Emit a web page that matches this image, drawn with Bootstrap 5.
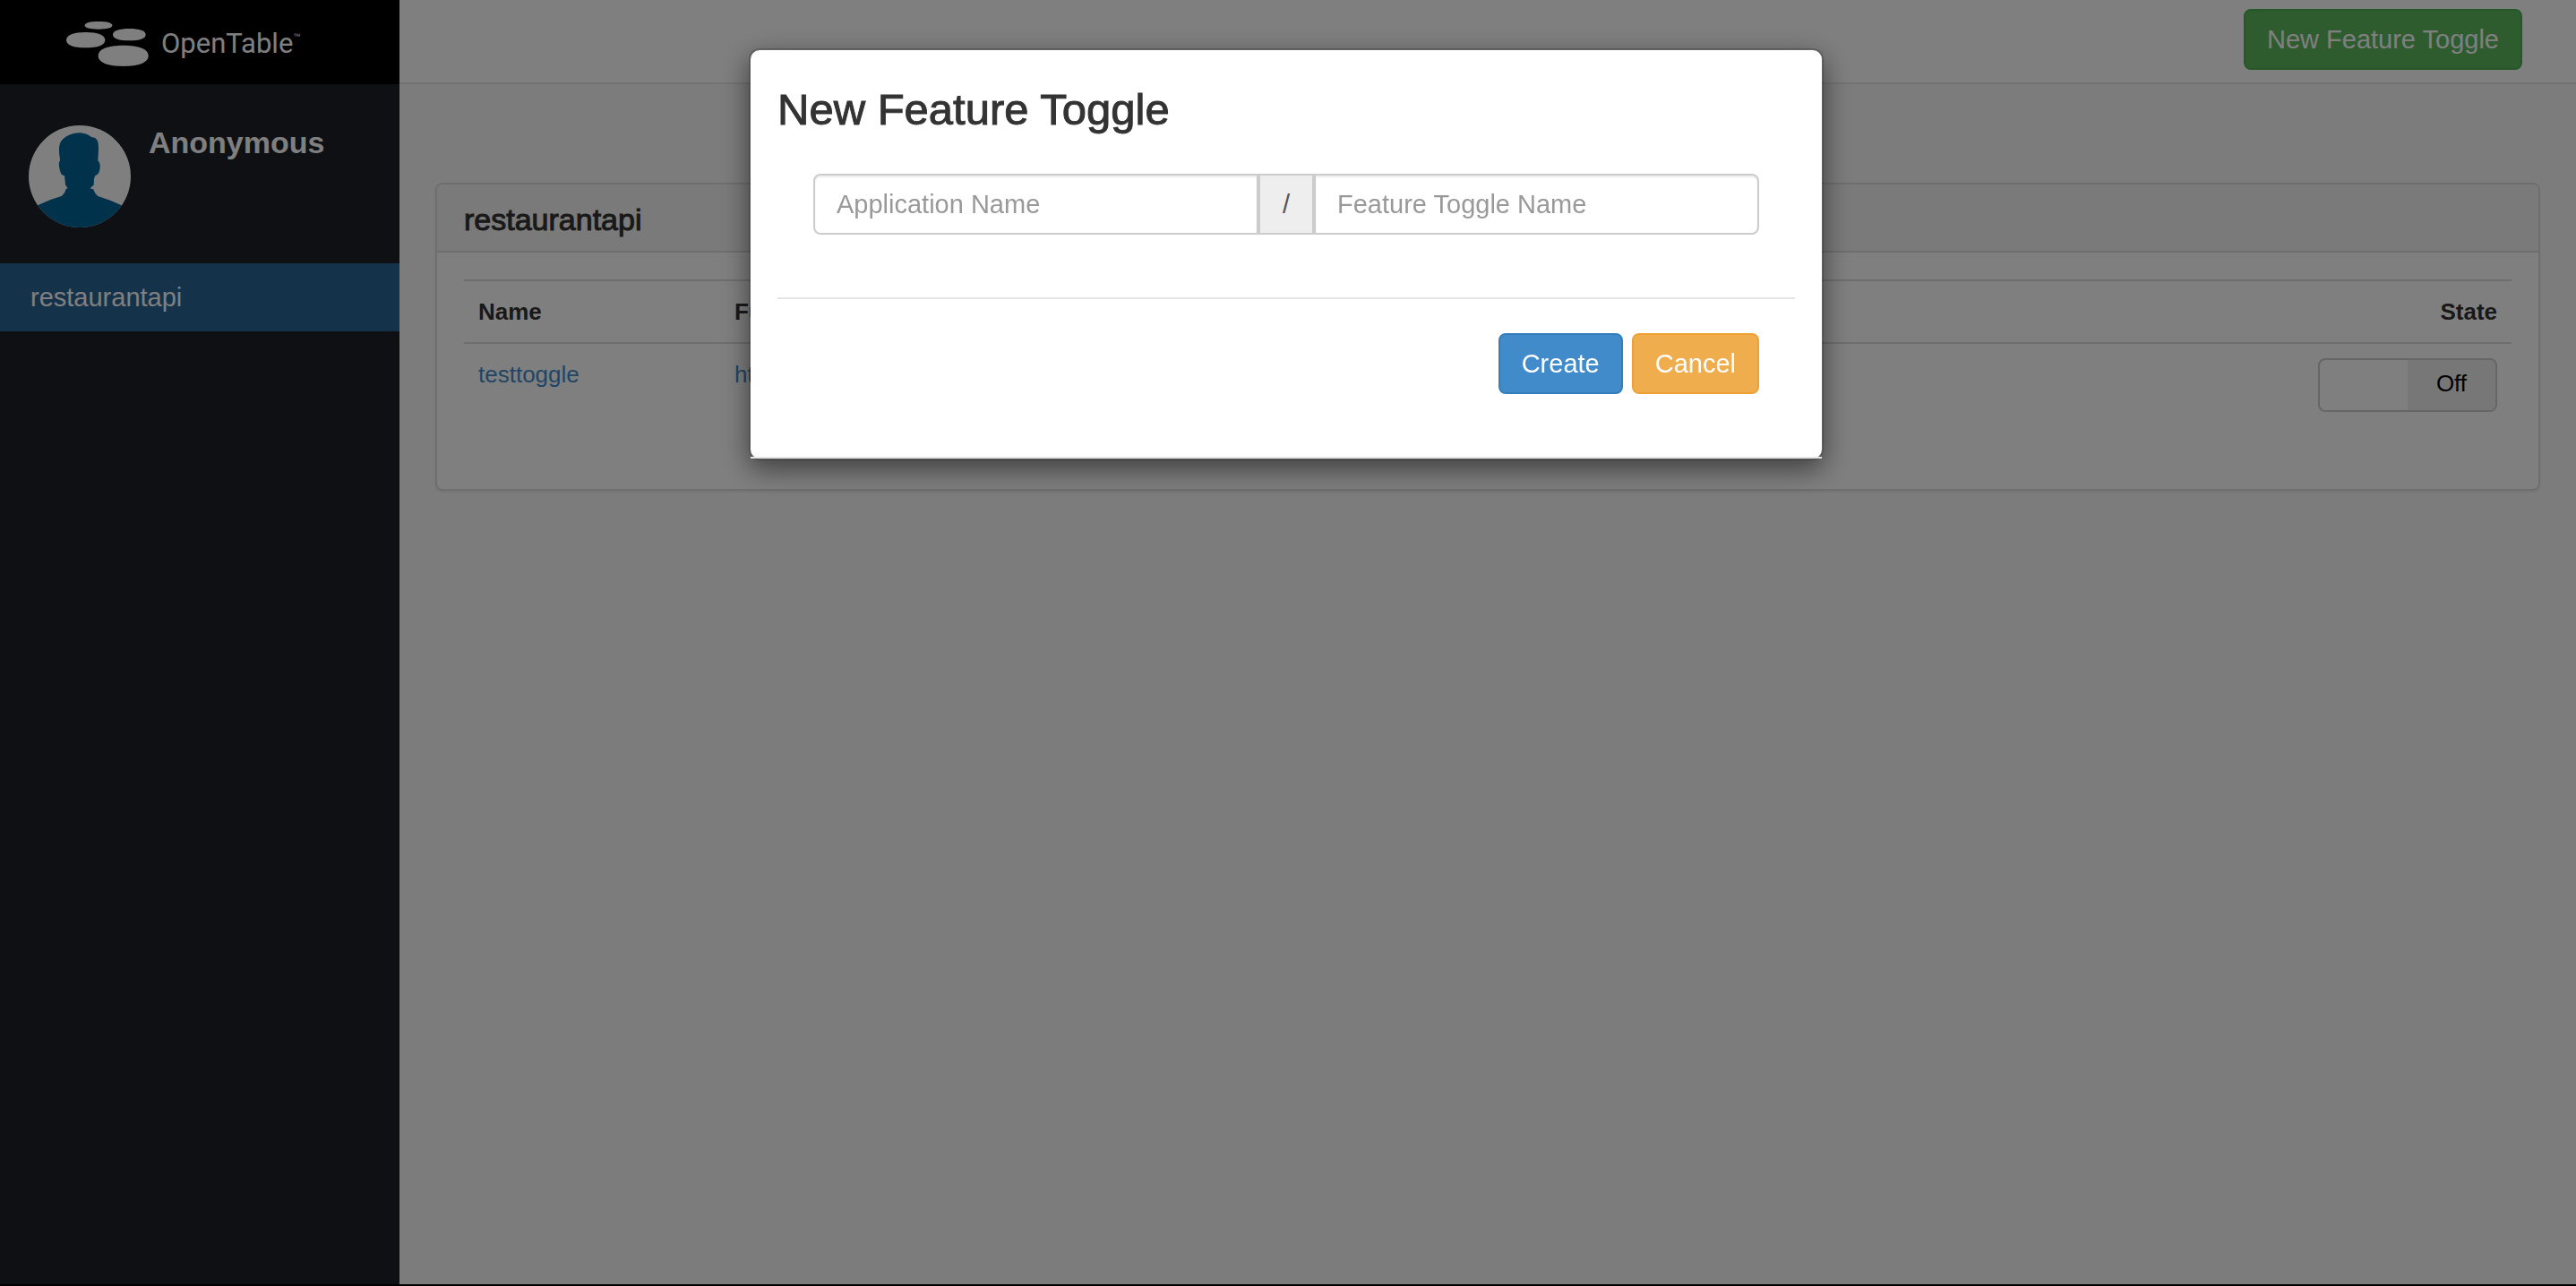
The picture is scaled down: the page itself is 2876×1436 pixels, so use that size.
<!DOCTYPE html>
<html lang="en">
<head>
<meta charset="utf-8">
<meta name="viewport" content="width=device-width, initial-scale=1">
<title>Feature Toggles</title>
<link href="https://cdn.jsdelivr.net/npm/bootstrap@5.3.0/dist/css/bootstrap.min.css" rel="stylesheet">
<style>
:root { --ui-line: #ddd; --ui-text: #333; }
body { font-family: "Liberation Sans", Arial, sans-serif; font-size: 29px; line-height: 40px; color: var(--ui-text); background: #f8f8f8; }
a { text-decoration: none; }
.app-shell { border-bottom: 2px solid #000; }
.side-panel { width: 446px; background: #1c2026; color: #fff; }
.brand-bar { height: 94px; background: #000; padding: 4px 0 0 74px; gap: 14px; }
.brand-bar, .brand-bar:hover { color: #fff; }
.brand-word { font-family: Roboto, sans-serif; font-size: 31px; }
.brand-tm { font-size: 8px; line-height: 8px; }
.user-box { padding: 46px 32px 40px; gap: 20px; }
.user-name { font-size: 34px; font-weight: 700; line-height: 38px; }
.side-nav .nav-link { background: #2a6496; color: #fff; padding: 18px 34px; }
.top-bar { height: 94px; background: #fff; border-bottom: 2px solid #e7e7e7; padding: 10px 60px 0 0; }
.btn { --bs-btn-font-size: 29px; --bs-btn-line-height: 40px; --bs-btn-padding-x: 24px; --bs-btn-padding-y: 12px; --bs-btn-border-width: 2px; --bs-btn-border-radius: 8px; }
.btn-success { --bs-btn-bg: #5cb85c; --bs-btn-border-color: #4cae4c; }
.btn-primary { --bs-btn-bg: #428bca; --bs-btn-border-color: #357ebd; }
.btn-warning { --bs-btn-bg: #f0ad4e; --bs-btn-border-color: #eea236; --bs-btn-color: #fff; }
.toggle-area { padding: 110px 40px 0; }
.card { --bs-card-border-color: var(--ui-line); --bs-card-border-width: 2px; --bs-card-border-radius: 8px; --bs-card-inner-border-radius: 6px; --bs-card-cap-bg: #f5f5f5; --bs-card-cap-padding-y: 20px; --bs-card-cap-padding-x: 30px; --bs-card-spacer-x: 30px; --bs-card-spacer-y: 30px; box-shadow: 0 2px 2px rgba(0,0,0,.05); }
.card-header { padding-top: 22px; padding-bottom: 18px; }
.card-header h2 { font-size: 34px; line-height: 34px; font-weight: 400; -webkit-text-stroke: 1px currentColor; }
.toggle-table { --bs-table-color: var(--ui-text); font-size: 26px; line-height: 36px; margin-bottom: 40px; table-layout: fixed; }
.toggle-table > * > tr > * { padding: 16px; border-width: 2px 0 0; border-color: var(--ui-line); }
.toggle-table a { color: #428bca; }
.name-col { width: 286px; }
.state-col { width: 240px; }
.switch-box { width: 200px; height: 60px; border: 2px solid #ccc; border-radius: 8px; background: #fff; padding: 0; overflow: hidden; font-size: 26px; line-height: 52px; color: #000; }
.switch-box span { width: 50%; background: #eee; padding-bottom: 4px; }
.modal { --bs-modal-width: 1200px; --bs-modal-margin: 54px; --bs-modal-border-width: 2px; --bs-modal-border-radius: 12px; --bs-modal-border-color: rgba(0,0,0,.2); --bs-modal-padding: 30px; padding-right: 4px; }
.modal-content { background-clip: padding-box; box-shadow: 0 10px 30px rgba(0,0,0,.5); }
.modal-title { font-size: 49px; line-height: 52px; font-weight: 400; -webkit-text-stroke: 1px currentColor; }
.modal-body { padding-top: 40px; padding-bottom: 70px; }
.form-inset { padding: 0 40px; }
.input-row { margin-top: 46px; }
.input-group > .form-control, .input-group-text { font-size: 29px; line-height: 40px; padding: 12px 24px; border: 2px solid #ccc; border-radius: 8px; color: #555; }
.input-group > .form-control { box-shadow: inset 0 2px 2px rgba(0,0,0,.075); }
.input-group > .form-control::placeholder { color: #999; }
.input-group > .input-group-text { background: #eee; padding: 12px 25px; }
.modal hr { margin: 70px 0 38px; border-top: 2px solid #e5e5e5; opacity: 1; }
.action-row { gap: 10px; }
.foot-rule { border-top: 2px solid #e5e5e5; }
</style>
<script src="https://cdn.jsdelivr.net/npm/bootstrap@5.3.0/dist/js/bootstrap.bundle.min.js" defer></script>
</head>
<body>
<div class="app-shell d-flex min-vh-100">
  <aside class="side-panel flex-shrink-0">
    <a href="#" class="brand-bar d-flex align-items-center">
      <svg width="92" height="50" viewBox="222 72 274 150" fill="#fff" aria-hidden="true">
        <defs><path id="plate" d="M-1 0C-1-.66-.62-1 0-1S1-.66 1 0 .62 1 0 1-1 .66-1 0Z"/></defs>
        <use href="#plate" transform="translate(329 85) scale(46 13)"/>
        <use href="#plate" transform="translate(286 134) scale(65 26)"/>
        <use href="#plate" transform="translate(432 116) scale(55 20)"/>
        <use href="#plate" transform="translate(412 187) scale(84 35)"/>
      </svg>
      <span class="d-flex"><span class="brand-word">OpenTable</span><span class="brand-tm pt-2">™</span></span>
    </a>
    <div class="user-box d-flex">
      <svg width="114" height="114" viewBox="96 420 342 342" role="img" aria-label="Avatar">
        <defs><clipPath id="round"><circle cx="267" cy="591" r="171"/></clipPath></defs>
        <g clip-path="url(#round)">
          <path fill="#fff" d="M96 420h342v342H96z"/>
          <path fill="#006496" d="M96 702L126 688Q165 668 206 657Q216 650 221 633L227 631L219 619L216 588Q205 588 201 572Q195 550 199 540Q202 541 201 533Q196 505 199 488C203 462 236 445 268 445Q289 446 306 459C328 461 330 476 330 500L328 538Q336 546 335 560Q334 584 319 588L315 598L314 620L304 628L305 633L313 634Q318 650 328 657Q370 670 407 688L438 702V762H96Z"/>
        </g>
      </svg>
      <div class="user-name">Anonymous</div>
    </div>
    <nav class="side-nav nav flex-column">
      <a class="nav-link" href="#">restaurantapi</a>
    </nav>
  </aside>
  <div class="flex-grow-1">
    <header class="top-bar d-flex justify-content-end align-items-start">
      <button type="button" class="btn btn-success">New Feature Toggle</button>
    </header>
    <main class="toggle-area">
      <section class="card">
        <div class="card-header"><h2 class="mb-0">restaurantapi</h2></div>
        <div class="card-body">
          <table class="table toggle-table">
            <thead>
              <tr><th class="name-col">Name</th><th>Full Path</th><th class="state-col text-end">State</th></tr>
            </thead>
            <tbody>
              <tr>
                <td><a href="#">testtoggle</a></td>
                <td><a href="#">http</a></td>
                <td><button type="button" role="switch" aria-checked="false" aria-label="testtoggle state" class="switch-box d-flex justify-content-end ms-auto"><span>Off</span></button></td>
              </tr>
            </tbody>
          </table>
        </div>
      </section>
    </main>
  </div>
</div>

<div class="modal-backdrop show"></div>
<div class="modal d-block" tabindex="-1" role="dialog" aria-labelledby="dialogTitle">
  <div class="modal-dialog">
    <form class="modal-content">
      <div class="modal-body">
        <h1 class="modal-title" id="dialogTitle">New Feature Toggle</h1>
        <div class="form-inset input-row">
          <div class="input-group">
            <input type="text" class="form-control" placeholder="Application Name" aria-label="Application Name">
            <span class="input-group-text m-0">/</span>
            <input type="text" class="form-control m-0" placeholder="Feature Toggle Name" aria-label="Feature Toggle Name">
          </div>
        </div>
        <hr>
        <div class="form-inset action-row d-flex justify-content-end">
          <button type="submit" class="btn btn-primary">Create</button>
          <button type="button" class="btn btn-warning">Cancel</button>
        </div>
      </div>
      <div class="foot-rule"></div>
    </form>
  </div>
</div>
</body>
</html>
